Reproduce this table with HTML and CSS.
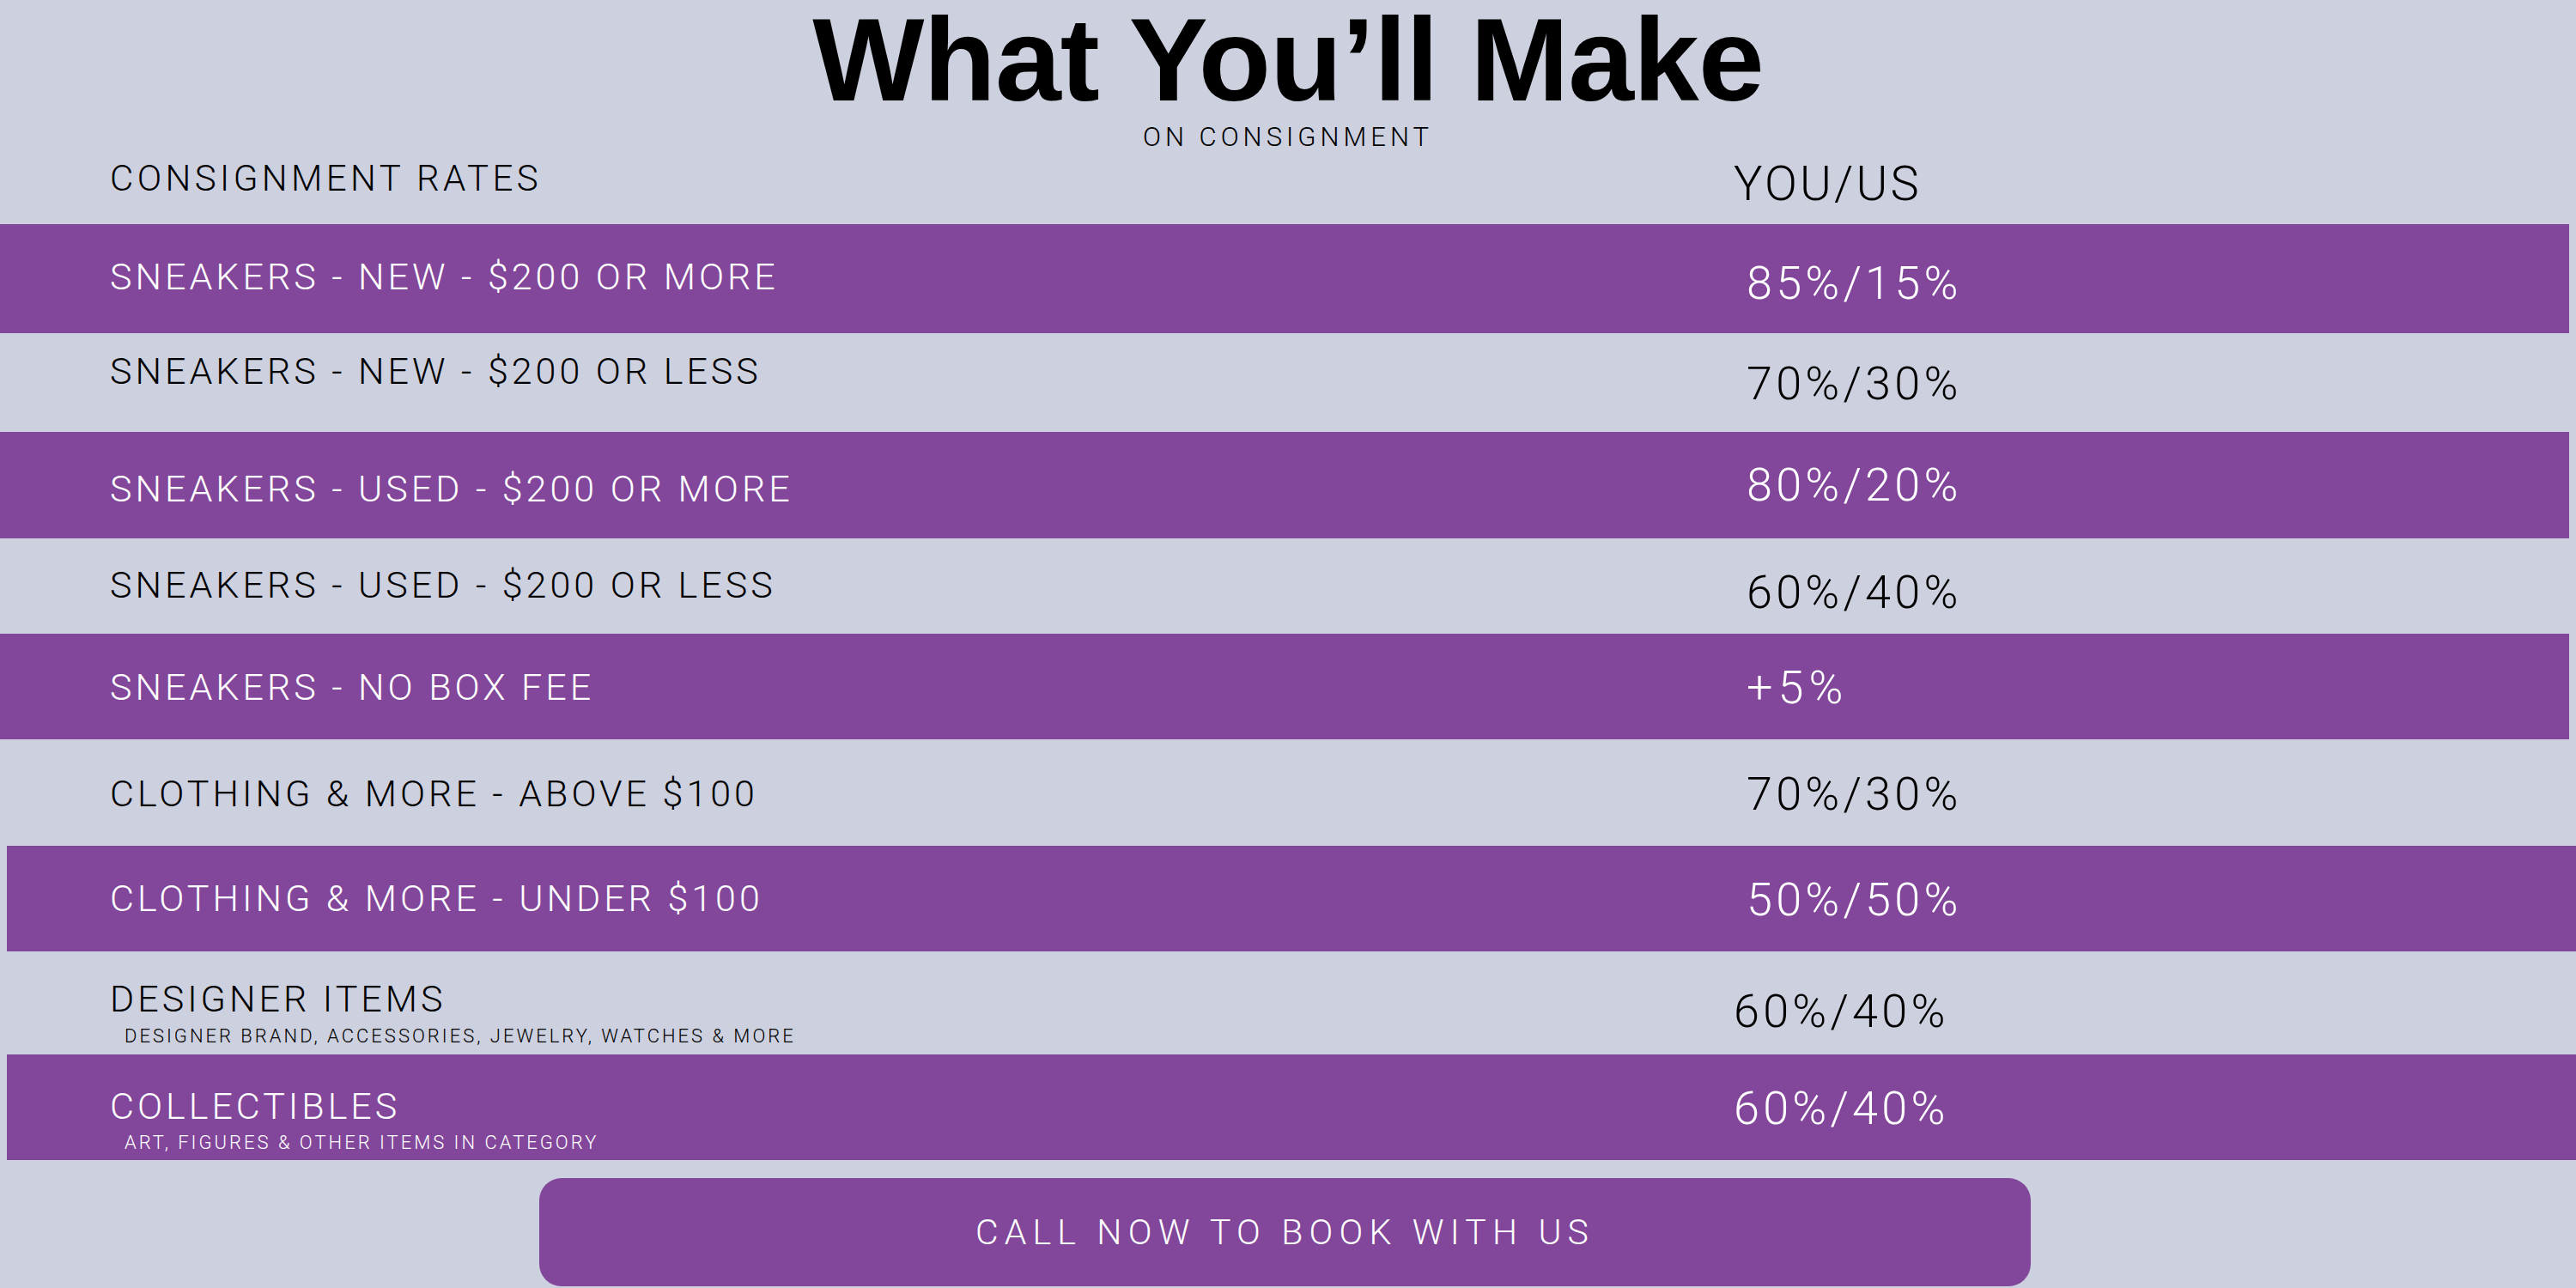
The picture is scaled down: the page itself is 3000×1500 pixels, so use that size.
FILE: index.html
```html
<!DOCTYPE html>
<html lang="en">
<head>
<meta charset="utf-8">
<title>What You’ll Make</title>
<link rel="stylesheet" href="styles.css">
</head>
<body>
<main class="page">
  <header class="head">
    <h1 class="title">What You’ll Make</h1>
    <p class="subtitle">ON CONSIGNMENT</p>
  </header>
  <section class="rates">
    <div class="row row-head">
      <div class="label-cell"><span class="label label-head">CONSIGNMENT RATES</span></div>
      <span class="value value-head value-left">YOU/US</span>
    </div>
    <div class="row band band-a r1">
      <div class="label-cell"><span class="label">SNEAKERS - NEW - $200 OR MORE</span></div>
      <span class="value">85%/15%</span>
    </div>
    <div class="row r2">
      <div class="label-cell"><span class="label">SNEAKERS - NEW - $200 OR LESS</span></div>
      <span class="value">70%/30%</span>
    </div>
    <div class="row band band-a r3">
      <div class="label-cell"><span class="label">SNEAKERS - USED - $200 OR MORE</span></div>
      <span class="value">80%/20%</span>
    </div>
    <div class="row r4">
      <div class="label-cell"><span class="label">SNEAKERS - USED - $200 OR LESS</span></div>
      <span class="value">60%/40%</span>
    </div>
    <div class="row band band-a r5">
      <div class="label-cell"><span class="label">SNEAKERS - NO BOX FEE</span></div>
      <span class="value value-plus">+5%</span>
    </div>
    <div class="row r6">
      <div class="label-cell"><span class="label">CLOTHING &amp; MORE - ABOVE $100</span></div>
      <span class="value">70%/30%</span>
    </div>
    <div class="row band band-b r7">
      <div class="label-cell"><span class="label">CLOTHING &amp; MORE - UNDER $100</span></div>
      <span class="value">50%/50%</span>
    </div>
    <div class="row r8">
      <div class="label-cell">
        <span class="label">DESIGNER ITEMS</span>
        <span class="note">DESIGNER BRAND, ACCESSORIES, JEWELRY, WATCHES &amp; MORE</span>
      </div>
      <span class="value value-left">60%/40%</span>
    </div>
    <div class="row band band-b r9">
      <div class="label-cell">
        <span class="label">COLLECTIBLES</span>
        <span class="note note-tight">ART, FIGURES &amp; OTHER ITEMS IN CATEGORY</span>
      </div>
      <span class="value value-left">60%/40%</span>
    </div>
  </section>
  <div class="cta-wrap">
    <a class="cta" href="#">CALL NOW TO BOOK WITH US</a>
  </div>
</main>
</body>
</html>
```

FILE: styles.css
```css
* { box-sizing: border-box; }
html, body { margin: 0; padding: 0; }
body {
  background: #cdd0df;
  width: 3000px;
  height: 1500px;
  overflow: hidden;
  font-family: "Roboto", "Liberation Sans", Arial, sans-serif;
  font-weight: 300;
  color: #000;
}
.page { width: 3000px; height: 1500px; display: flex; flex-direction: column; }

.head { height: 178px; display: flex; flex-direction: column; align-items: center; }
.title {
  margin: 0;
  font-family: "Liberation Sans", Arial, sans-serif;
  font-weight: 700;
  font-size: 138px;
  line-height: 138px;
  letter-spacing: -0.9px;
}
.subtitle { margin: 6px 0 0; font-size: 31px; line-height: 31px; letter-spacing: 5px; }

.rates { display: flex; flex-direction: column; }
.row { display: flex; align-items: flex-start; padding-left: 128px; }
.band { background: #82479a; color: #fff; }
.band-a { margin-right: 8px; }
.band-b { margin-left: 8px; padding-left: 120px; }

.label-cell { width: 1906px; flex: 0 0 1906px; padding-top: var(--lp); display: flex; flex-direction: column; align-items: flex-start; }
.label { font-size: 43px; line-height: 43px; white-space: nowrap; letter-spacing: 4px; }
.label-head { font-size: 42px; line-height: 42px; letter-spacing: 4.4px; }
.note { font-size: 22px; line-height: 22px; margin: 11px 0 0 17px; white-space: nowrap; letter-spacing: 3px; }
.note-tight { margin-top: 10px; }
.value { padding-top: var(--vp); font-size: 54px; line-height: 54px; white-space: nowrap; letter-spacing: 4.2px; }
.value-plus { letter-spacing: 6px; }
.value-head { font-size: 56px; line-height: 56px; letter-spacing: 3.2px; }
.value-left { margin-left: -15px; }

.row-head { height: 83px; --lp: 9px; --vp: 8px; }
.r1 { height: 127px; --lp: 40px; --vp: 42px; }
.r2 { height: 115px; --lp: 23px; --vp: 32px; }
.r3 { height: 124px; --lp: 45px; --vp: 35px; }
.r4 { height: 111px; --lp: 33px; --vp: 36px; }
.r5 { height: 123px; --lp: 41px; --vp: 36px; }
.r6 { height: 124px; --lp: 42px; --vp: 37px; }
.r7 { height: 123px; --lp: 40px; --vp: 36px; }
.r8 { height: 120px; --lp: 34px; --vp: 43px; }
.r9 { height: 123px; --lp: 39px; --vp: 36px; }

.cta-wrap { padding: 21px 0 0 628px; }
.cta {
  width: 1737px;
  height: 126px;
  border-radius: 26px;
  background: #82479a;
  color: #fff;
  display: flex;
  align-items: center;
  justify-content: center;
  font-size: 41px;
  letter-spacing: 7.2px;
  text-decoration: none;
}
```
